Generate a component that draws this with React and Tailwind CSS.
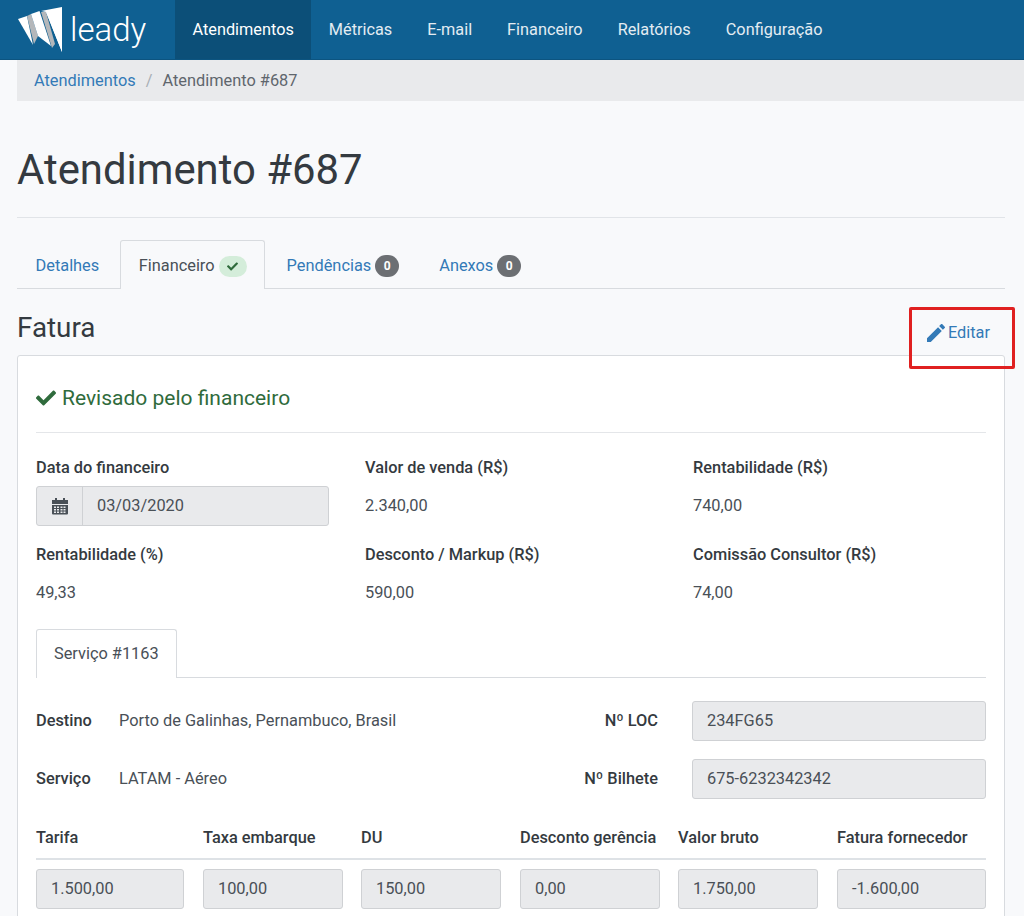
import React from 'react';
import { FaCheck } from 'react-icons/fa';

const navItems = ['Métricas', 'E-mail', 'Financeiro', 'Relatórios', 'Configuração'];

const summary = [
  { label: 'Valor de venda (R$)', value: '2.340,00' },
  { label: 'Rentabilidade (R$)', value: '740,00' },
  { label: 'Rentabilidade (%)', value: '49,33' },
  { label: 'Desconto / Markup (R$)', value: '590,00' },
  { label: 'Comissão Consultor (R$)', value: '74,00' },
];

const fares = [
  { label: 'Tarifa', value: '1.500,00' },
  { label: 'Taxa embarque', value: '100,00' },
  { label: 'DU', value: '150,00' },
  { label: 'Desconto gerência', value: '0,00' },
  { label: 'Valor bruto', value: '1.750,00' },
  { label: 'Fatura fornecedor', value: '-1.600,00' },
];

function Logo() {
  return (
    <svg width="46" height="48" viewBox="18 6 46 48" className="shrink-0">
      <path d="M18 19 L27 16 L33 45 Z" fill="#ffffff" />
      <path d="M27 16 L31 14 L38 36 L34 44 Z" fill="#b4b7ba" />
      <path d="M31 14 L39.500 11 L51 46 L38 36 Z" fill="#ffffff" />
      <path d="M41 12 L46 12 L55 44 L52 48 Z" fill="#b4b7ba" />
      <path d="M41 11 L62 7 L62 52 L46 12 Z" fill="#ffffff" />
      <path d="M46 12 L62 20 L62 52 Z" fill="#ffffff" />
    </svg>
  );
}

function CalendarIcon() {
  return (
    <svg width="16" height="17" viewBox="0 0 16 17" fill="#495057">
      <path d="M3 0h2v2h6V0h2v2h3v4H0V2h3z" />
      <path d="M0 7h16v8.500a1 1 0 0 1-1 1H1a1 1 0 0 1-1-1zm2 1.500v1.500h2V8.500zm3 0v1.500h2V8.500zm3.500 0v1.500h2V8.500zm3 0v1.500h2V8.500zM2 11v1.500h2V11zm3 0v1.500h2V11zm3.500 0v1.500h2V11zm3 0v1.500h2V11zM2 13.500V15h2v-1.500zm3 0V15h2v-1.500zm3.500 0V15h2v-1.500zm3 0V15h2v-1.500z" fillRule="evenodd" />
    </svg>
  );
}

function PencilIcon() {
  return (
    <svg width="18" height="18" viewBox="3 3 18 18" fill="currentColor">
      <path d="M3 17.250V21h3.750L17.810 9.940l-3.750-3.750L3 17.250zM20.710 7.040c.39-.39.39-1.020 0-1.410l-2.340-2.340c-.39-.39-1.020-.39-1.410 0l-1.830 1.830 3.750 3.750 1.830-1.830z" />
    </svg>
  );
}

function Badge({ children }) {
  return (
    <span className="ml-[4px] inline-flex h-[22px] w-[24px] items-center justify-center rounded-full bg-[#6c6f73] text-[12px] font-bold text-white">
      {children}
    </span>
  );
}

function Field({ children, className }) {
  return (
    <div className={`flex h-[40px] items-center rounded-[3px] border border-[#cfd1d4] bg-[#e9eaec] px-[14px] text-[#495057] ${className}`}>
      {children}
    </div>
  );
}

export default function App() {
  return (
    <div className="h-[916px] overflow-hidden bg-[#f8f9fb] text-[16.35px] leading-[24px] text-[#343a40] font-['Roboto',sans-serif]">
      <header className="flex h-[60px] border-b border-[#0c5480] bg-[#0f6092]">
        <div className="flex w-[175px] items-center gap-[6px] pl-[18px]">
          <Logo />
          <span className="text-[33px] font-light leading-none text-white">leady</span>
        </div>
        <nav className="flex text-[16.3px]">
          <a className="flex items-center bg-[#0c4f78] px-[17.5px] text-white">Atendimentos</a>
          {navItems.map(item => (
            <a key={item} className="flex items-center px-[17.5px] text-[#e3ecf2]">{item}</a>
          ))}
        </nav>
      </header>

      <div className="pl-[17px] pr-[19px]">
        <div className="-mr-[19px] flex h-[41px] items-center bg-[#e9eaec] pl-[17px] pt-[1px]">
          <a className="text-[#337ab7]">Atendimentos</a>
          <span className="px-[10px] text-[#a8aeb4]">/</span>
          <span className="text-[#5f666d]">Atendimento #687</span>
        </div>

        <h1 className="mt-[44px] text-[41.85px] leading-[50px] text-[#343a40]">Atendimento #687</h1>
        <div className="mt-[22px] border-t border-[#e1e4e8]" />

        <div className="mt-[22px] flex h-[49px] border-b border-[#d8dbdf]">
          <a className="mr-[2px] flex items-center px-[18.5px] pt-[3px] text-[#337ab7]">Detalhes</a>
          <div className="-mb-px flex items-center rounded-t-[3px] border border-b-0 border-[#d8dbdf] bg-[#f8f9fb] pl-[18px] pr-[17px] pt-[2px] text-[#495057]">
            Financeiro
            <span className="ml-[4px] inline-flex h-[21px] w-[28px] items-center justify-center rounded-full bg-[#d4edda]">
              <FaCheck size={11} className="text-[#2f6b3c]" />
            </span>
          </div>
          <a className="flex items-center pl-[22px] pr-[20px] pt-[3px] text-[#337ab7]">Pendências<Badge>0</Badge></a>
          <a className="flex items-center px-[20px] pt-[3px] text-[#337ab7]">Anexos<Badge>0</Badge></a>
        </div>

        <div className="relative flex h-[66px] items-center justify-between">
          <h2 className="mt-[11px] text-[27.8px] leading-[32px]">Fatura</h2>
          <a className="mr-[15px] mt-[21px] flex items-center gap-[3px] text-[#337ab7]">
            <PencilIcon />
            Editar
          </a>
          {/* red highlight drawn over the screenshot */}
          <div className="absolute right-[-10px] top-[18px] h-[62px] w-[106px] rounded-[2px] border-[3px] border-[#e02020]" />
        </div>

        <div className="h-[600px] rounded-t-[3px] border border-[#d8dbdf] bg-white px-[18px]">
          <div className="flex h-[77px] items-center gap-[6px] border-b border-[#e4e6e9] pt-[8px] text-[21px] text-[#2f6b3c]">
            <FaCheck size={20} />
            Revisado pelo financeiro
          </div>

          <div className="grid grid-cols-[329px_328px_1fr] pt-[23px]">
            <div className="h-[86.5px]">
              <label className="block font-medium">Data do financeiro</label>
              <div className="mt-[6px] flex h-[40px] w-[293px] rounded-[3px] border border-[#cfd1d4] bg-[#e9eaec] text-[#495057]">
                <div className="flex w-[46px] items-center justify-center border-r border-[#cfd1d4]">
                  <CalendarIcon />
                </div>
                <div className="flex items-center pl-[14px]">03/03/2020</div>
              </div>
            </div>
            {summary.map(item => (
              <div key={item.label} className="h-[86.5px]">
                <label className="block font-medium">{item.label}</label>
                <div className="mt-[14px] text-[#495057]">{item.value}</div>
              </div>
            ))}
          </div>

          <div className="flex h-[49px] border-b border-[#d8dbdf]">
            <div className="-mb-px flex items-center rounded-t-[3px] border border-b-0 border-[#d8dbdf] bg-white px-[17px] text-[#495057]">
              Serviço #1163
            </div>
          </div>

          <div className="mt-[23px] grid grid-cols-[83px_1fr_auto] items-center gap-y-[18px]">
            <span className="font-medium">Destino</span>
            <span className="text-[#495057]">Porto de Galinhas, Pernambuco, Brasil</span>
            <div className="flex items-center justify-end">
              <span className="mr-[34px] whitespace-nowrap font-medium">Nº LOC</span>
              <Field className="w-[294px]">234FG65</Field>
            </div>
            <span className="font-medium">Serviço</span>
            <span className="text-[#495057]">LATAM - Aéreo</span>
            <div className="flex items-center justify-end">
              <span className="mr-[34px] whitespace-nowrap font-medium">Nº Bilhete</span>
              <Field className="w-[294px]">675-6232342342</Field>
            </div>
          </div>

          <div className="mt-[17px] grid grid-cols-[167px_158px_159px_158px_159px_1fr]">
            {fares.map((f, i) => (
              <div key={f.label} className="flex flex-col">
                <div className="h-[44px] whitespace-nowrap border-b-2 border-[#dee2e6] pt-[10px] font-medium">{f.label}</div>
                <Field className={`mt-[9px] ${i === 0 ? 'w-[148px]' : i === 5 ? 'w-full' : 'w-[140px]'}`}>{f.value}</Field>
              </div>
            ))}
          </div>
        </div>
      </div>
    </div>
  );
}
